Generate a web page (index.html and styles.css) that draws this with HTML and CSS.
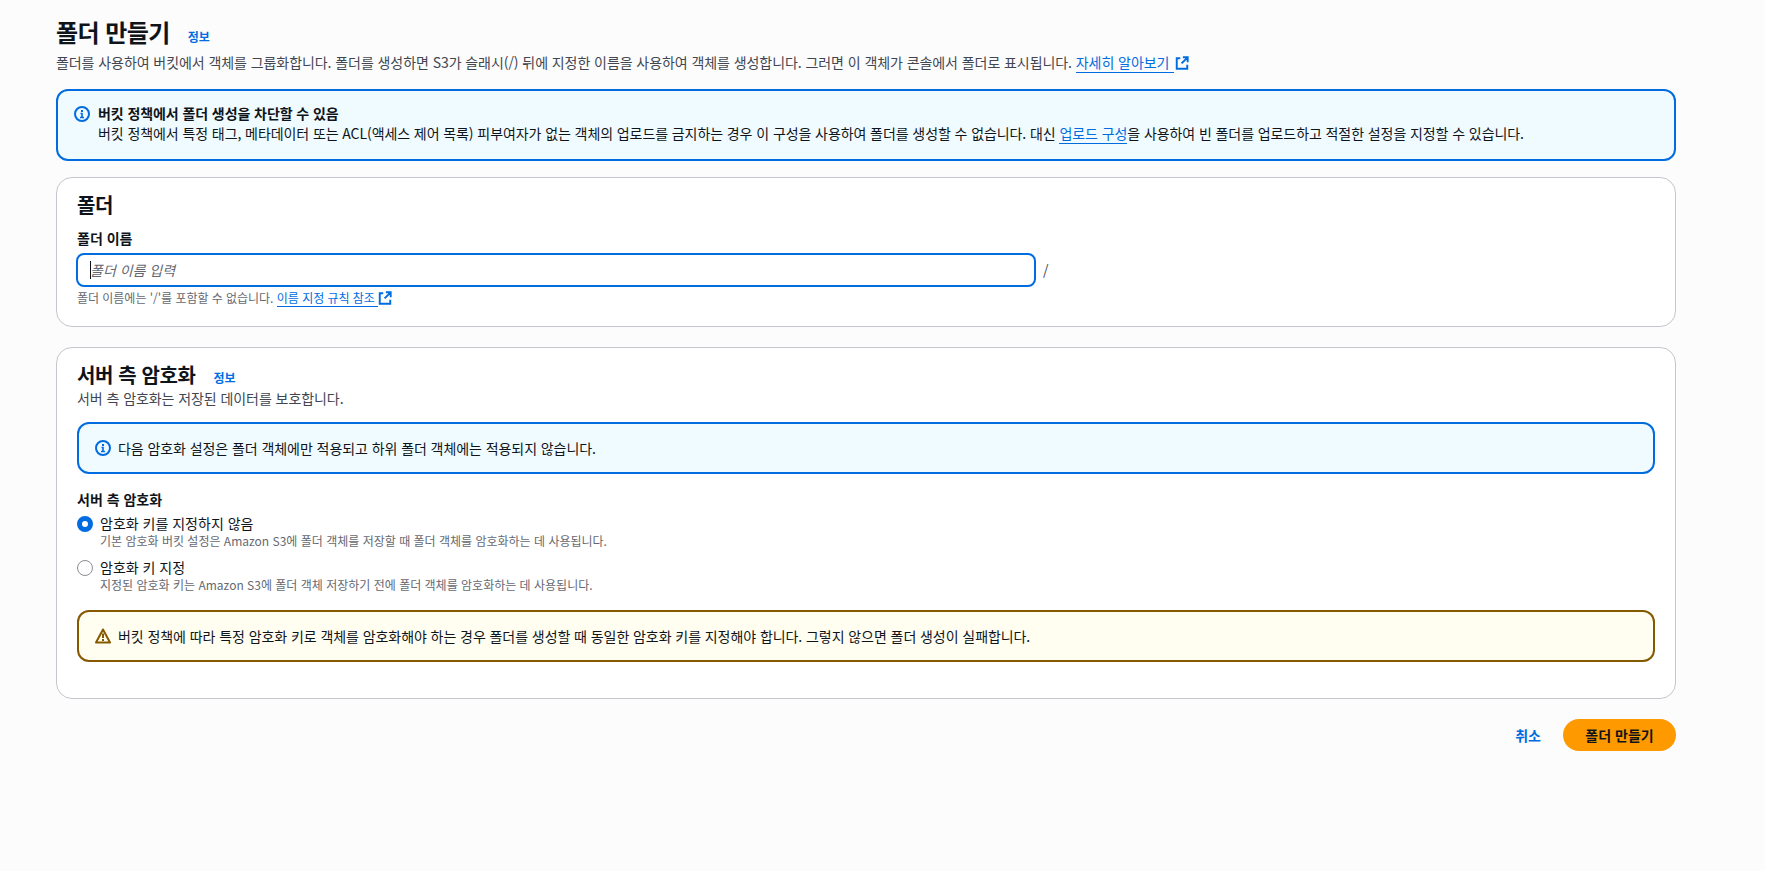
FILE: index.html
```html
<!DOCTYPE html>
<html lang="ko">
<head>
<meta charset="utf-8">
<title>폴더 만들기</title>
<link rel="stylesheet" href="styles.css">
</head>
<body>
<svg class="defs" width="0" height="0" aria-hidden="true">
  <symbol id="i-info" viewBox="0 0 16 16"><circle cx="8" cy="8" r="7" fill="none" stroke="currentColor" stroke-width="2"/><path d="M8 11.5V7.5H6.5M6 11.5h4" fill="none" stroke="currentColor" stroke-width="1.6"/><path d="M7 4h2v2H7z" fill="currentColor"/></symbol>
  <symbol id="i-ext" viewBox="0 0 16 16"><path d="M14.5 7V1.5H9M14.5 1.5 7.5 8.5M6 2.5H2v12h12v-4.500" fill="none" stroke="currentColor" stroke-width="2.200"/></symbol>
  <symbol id="i-warn" viewBox="0 0 16 16"><path d="M8 1.500 15 14.500H1z" fill="none" stroke="currentColor" stroke-width="2" stroke-linejoin="round"/><path d="M8 5.500v4.500M8 11v2" fill="none" stroke="currentColor" stroke-width="2"/></symbol>
</svg>
<main class="page">
  <header class="page-head">
    <div class="title-row"><h1 class="title">폴더 만들기</h1><a class="info-link" href="#">정보</a></div>
    <p class="desc">폴더를 사용하여 버킷에서 객체를 그룹화합니다. 폴더를 생성하면 S3가 슬래시(/) 뒤에 지정한 이름을 사용하여 객체를 생성합니다. 그러면 이 객체가 콘솔에서 폴더로 표시됩니다. <a class="link" href="#">자세히 알아보기 </a><svg class="ext"><use href="#i-ext"/></svg></p>
  </header>

  <section class="alert alert-info alert-top">
    <svg class="alert-icon"><use href="#i-info"/></svg>
    <div class="alert-body">
      <div class="alert-title">버킷 정책에서 폴더 생성을 차단할 수 있음</div>
      <div>버킷 정책에서 특정 태그, 메타데이터 또는 ACL(액세스 제어 목록) 피부여자가 없는 객체의 업로드를 금지하는 경우 이 구성을 사용하여 폴더를 생성할 수 없습니다. 대신 <a class="link" href="#">업로드 구성</a>을 사용하여 빈 폴더를 업로드하고 적절한 설정을 지정할 수 있습니다.</div>
    </div>
  </section>

  <section class="card card-folder">
    <h2 class="card-title">폴더</h2>
    <label class="field-label" for="name">폴더 이름</label>
    <div class="input-row">
      <div class="input-wrap"><input id="name" class="input" type="text" placeholder="폴더 이름 입력"><span class="caret"></span></div>
      <span class="slash">/</span>
    </div>
    <p class="hint">폴더 이름에는 '/'를 포함할 수 없습니다. <a class="link" href="#">이름 지정 규칙 참조 </a><svg class="ext"><use href="#i-ext"/></svg></p>
  </section>

  <section class="card card-enc">
    <div class="title-row"><h2 class="card-title">서버 측 암호화</h2><a class="info-link" href="#">정보</a></div>
    <p class="desc card-desc">서버 측 암호화는 저장된 데이터를 보호합니다.</p>

    <div class="alert alert-info alert-inner">
      <svg class="alert-icon"><use href="#i-info"/></svg>
      <div class="alert-body">다음 암호화 설정은 폴더 객체에만 적용되고 하위 폴더 객체에는 적용되지 않습니다.</div>
    </div>

    <div class="field-label group-label">서버 측 암호화</div>
    <div class="radio-row">
      <span class="radio radio-on"></span>
      <div><div class="radio-label">암호화 키를 지정하지 않음</div><div class="radio-desc">기본 암호화 버킷 설정은 Amazon S3에 폴더 객체를 저장할 때 폴더 객체를 암호화하는 데 사용됩니다.</div></div>
    </div>
    <div class="radio-row">
      <span class="radio"></span>
      <div><div class="radio-label">암호화 키 지정</div><div class="radio-desc">지정된 암호화 키는 Amazon S3에 폴더 객체 저장하기 전에 폴더 객체를 암호화하는 데 사용됩니다.</div></div>
    </div>

    <div class="alert alert-warn alert-inner">
      <svg class="alert-icon"><use href="#i-warn"/></svg>
      <div class="alert-body">버킷 정책에 따라 특정 암호화 키로 객체를 암호화해야 하는 경우 폴더를 생성할 때 동일한 암호화 키를 지정해야 합니다. 그렇지 않으면 폴더 생성이 실패합니다.</div>
    </div>
  </section>

  <footer class="actions">
    <button class="btn-cancel" type="button">취소</button>
    <button class="btn-primary" type="button">폴더 만들기</button>
  </footer>
</main>
</body>
</html>
```
FILE: styles.css
```css
* { box-sizing: border-box; }
html, body { margin: 0; padding: 0; }
body {
  background: #fcfcfc;
  color: #0f141a;
  font-family: "Noto Sans CJK KR", "Noto Sans", sans-serif;
  font-size: 14px;
  line-height: 20px;
  letter-spacing: -0.07px;
  min-height: 871px;
  overflow: hidden;
}
.defs { position: absolute; }
.page { padding: 17px 89px 0 56px; }
.title-row { display: flex; align-items: baseline; gap: 18px; }
.title { margin: 0; font-size: 24px; line-height: 30px; font-weight: 700; letter-spacing: -0.55px; }
.info-link { color: #006ce0; font-size: 12px; font-weight: 700; text-decoration: none; letter-spacing: 0; }
.desc { margin: 0; color: #424650; }
.page-head .desc { margin-top: 5px; }
.link { color: #006ce0; text-decoration: none; border-bottom: 1px solid #006ce0; }
.page-head .link { padding-right: 1px; }
.ext { width: 14px; height: 14px; color: #006ce0; vertical-align: -2px; margin-left: 1px; }
.alert {
  display: flex;
  border: 2px solid #006ce0;
  border-radius: 12px;
  background: #f0fbff;
}
.alert-top { margin-top: 17px; height: 72px; padding: 12px 16px; gap: 8px; letter-spacing: -0.085px; }
.alert-icon { flex: none; width: 16px; height: 16px; margin-top: 3px; color: #006ce0; }
.alert-body { color: #0f141a; }
.alert-title { font-weight: 700; }
.alert-inner { height: 52px; align-items: center; padding: 0 16px 1px; gap: 7px; }
.alert-inner .alert-icon { margin-top: 0; }
.alert-warn { background: #fffef0; border-color: #855900; margin-top: 17px; }
.alert-warn .alert-icon { color: #855900; }
.card {
  background: #fff;
  border: 1px solid #c6c6cd;
  border-radius: 16px;
  padding: 14px 20px 0;
}
.card-folder { margin-top: 16px; height: 150px; }
.card-enc { margin-top: 20px; height: 352px; }
.card-title { margin: 0; font-size: 20px; line-height: 26px; font-weight: 700; letter-spacing: -0.4px; }
.field-label { display: block; font-weight: 700; font-size: 14px; line-height: 20px; letter-spacing: 0; }
.card-folder .field-label { margin-top: 10px; }
.input-row { display: flex; align-items: center; gap: 7px; margin: 5px 0 0 -1px; }
.input-wrap { position: relative; width: 960px; }
.input {
  display: block;
  width: 100%;
  height: 34px;
  border: 2px solid #006ce0;
  border-radius: 8px;
  background: #fff;
  padding: 0 12px;
  font: inherit;
  outline: none;
}
.input::placeholder { color: #656871; font-style: italic; opacity: 1; }
.caret { position: absolute; left: 14px; top: 8px; width: 1px; height: 18px; background: #0f141a; }
.slash { color: #424650; font-size: 14px; }
.hint { margin: 2px 0 0; font-size: 12px; line-height: 17px; color: #656871; letter-spacing: -0.03px; }
.hint .ext { margin-left: 0; }
.card-desc { margin-top: 0; }
.alert-inner.alert-info { margin-top: 14px; }
.group-label { margin-top: 15px; }
.radio-row { display: flex; gap: 7px; margin-top: 4px; letter-spacing: 0; }
.radio-row + .radio-row { margin-top: 8px; }
.radio { flex: none; width: 16px; height: 16px; margin-top: 3px; border-radius: 50%; border: 1px solid #8c8c94; background: #fff; }
.radio-on { border: 5.5px solid #006ce0; }
.radio-label { font-size: 14px; line-height: 20px; color: #0f141a; }
.radio-desc { font-size: 12px; line-height: 16px; color: #656871; }
.actions { display: flex; justify-content: flex-end; align-items: center; gap: 22px; margin-top: 20px; }
.btn-cancel { border: 0; background: none; padding: 0; font: inherit; font-weight: 700; color: #006ce0; letter-spacing: 0; }
.btn-primary { border: 0; height: 32px; width: 113px; border-radius: 16px; background: #ff9900; font: inherit; font-weight: 700; color: #0f141a; letter-spacing: 0; }
```
